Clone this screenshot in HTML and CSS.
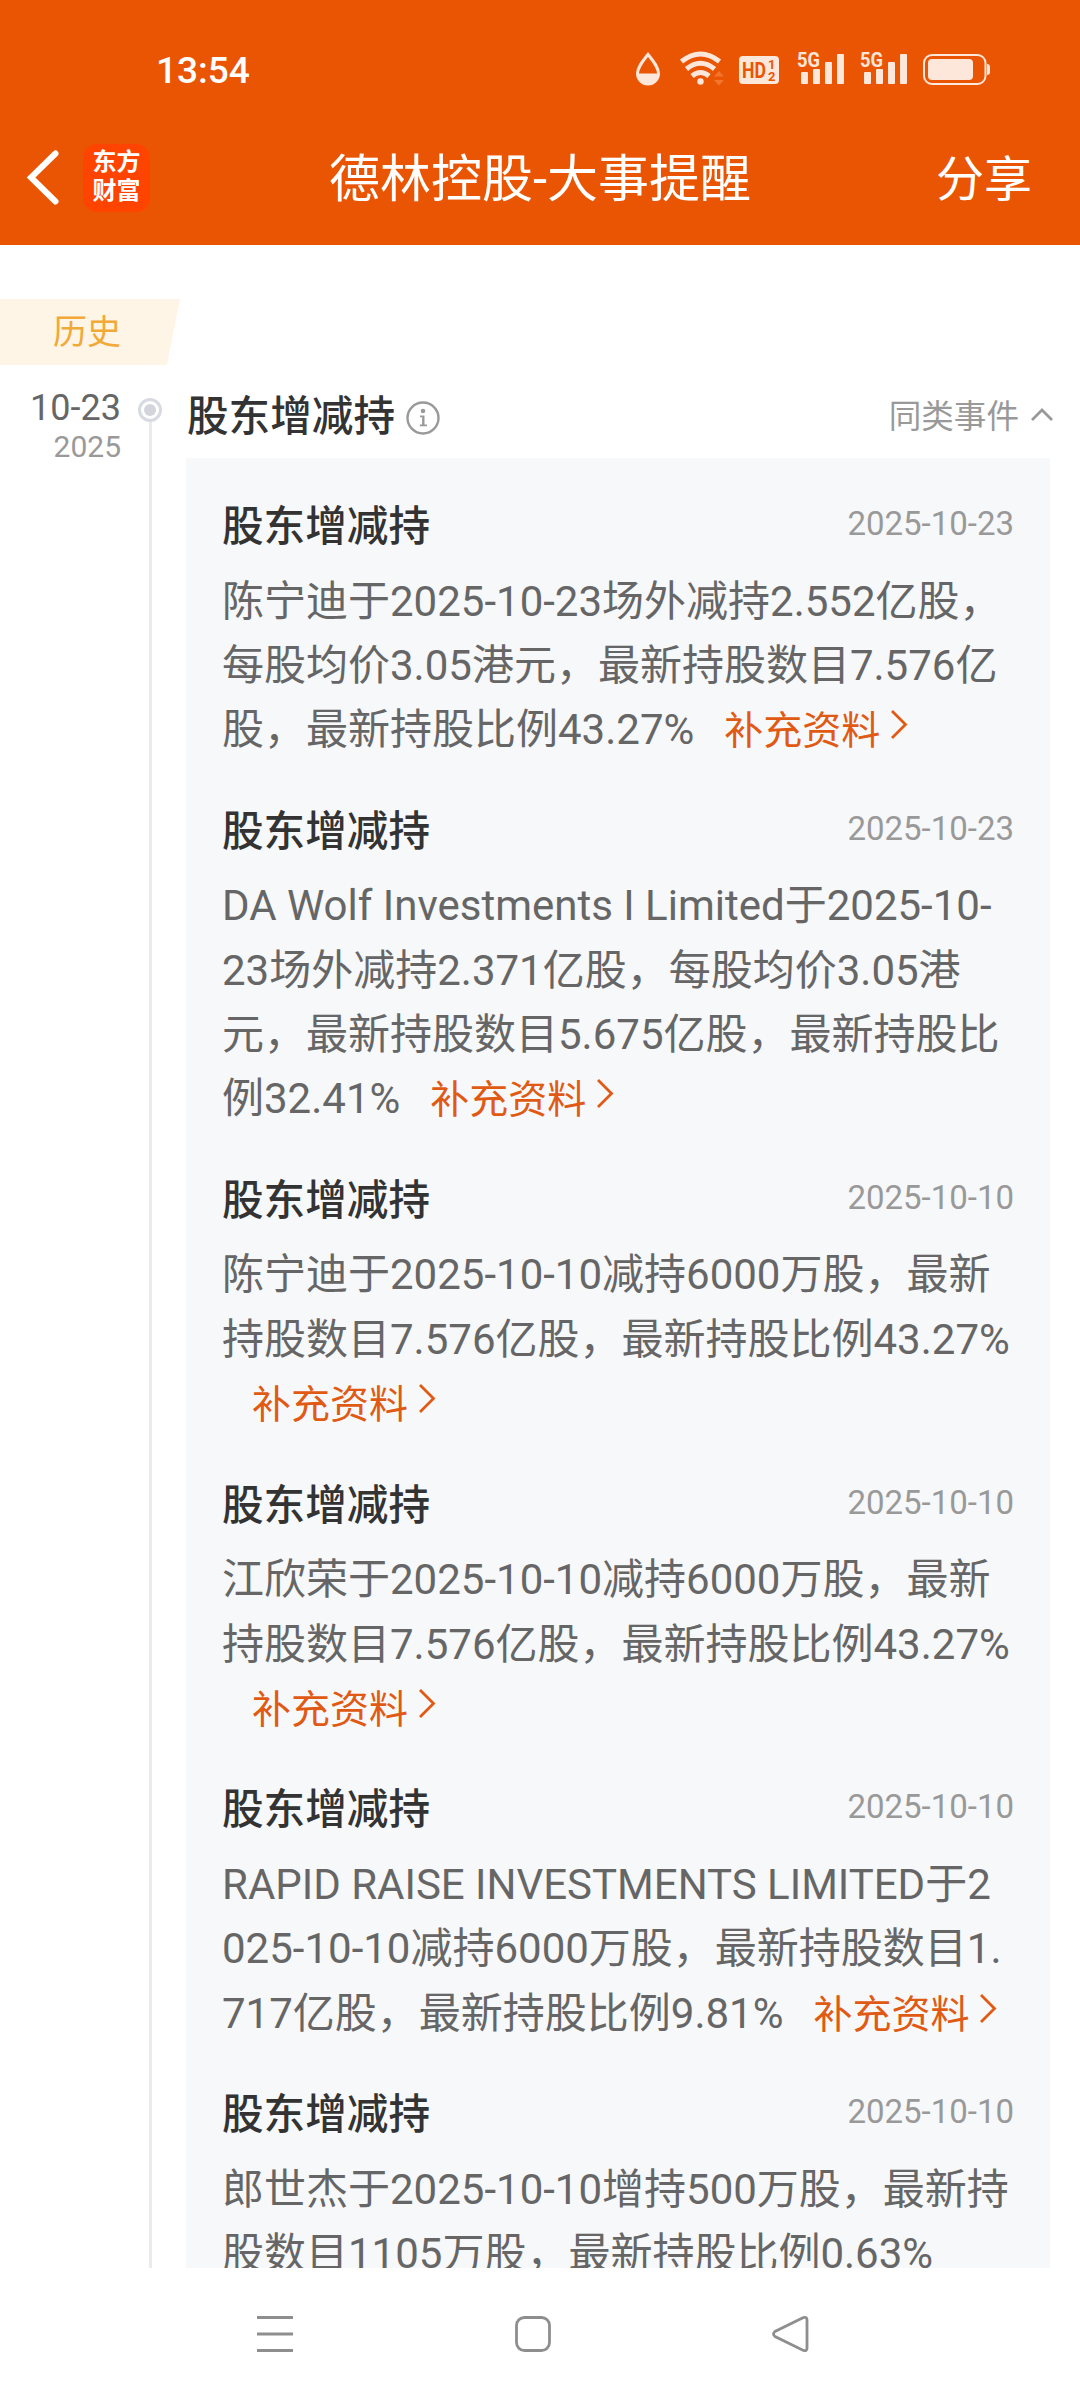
FILE: index.html
```html
<!DOCTYPE html>
<html lang="zh-CN">
<head>
<meta charset="utf-8">
<title>德林控股-大事提醒</title>
<link rel="stylesheet" href="styles.css">
</head>
<body>
<div class="screen">
  <header class="header">
    <div class="status">
      <span class="clock">13:54</span>
      <svg class="status-icons" width="370" height="48" viewBox="630 46 370 48">
        <g fill="#fde6da">
          <path d="M648 54.5C643 61 637.500 67 637.500 73.500a10.500 10.500 0 0 0 21 0C658.500 67 653 61 648 54.500z" fill="none" stroke="#fde6da" stroke-width="3"/>
          <path d="M637.500 73.500h21a10.500 10.500 0 0 1-21 0z"/>
          <g fill="none" stroke="#fde6da" stroke-width="5">
            <path d="M681.500 61.500q19-15 38 0"/>
            <path d="M686.500 69q14-11.500 28 0"/>
            <path d="M692 76q8.500-7 17 0"/>
          </g>
          <circle cx="700.500" cy="81.500" r="3.200"/>
          <path d="M719 71l5 5.500h-10zM719 85.500l5-5.500h-10z" fill="#f3752e"/>
          <rect x="739" y="56" width="40" height="28" rx="4"/>
          <rect x="801" y="72" width="7" height="12" rx="1"/><rect x="813" y="69" width="7" height="15" rx="1"/><rect x="825" y="62" width="7" height="22" rx="1"/><rect x="837" y="54" width="7" height="30" rx="1"/>
          <rect x="864" y="72" width="7" height="12" rx="1"/><rect x="876" y="69" width="7" height="15" rx="1"/><rect x="888" y="62" width="7" height="22" rx="1"/><rect x="900" y="54" width="7" height="30" rx="1"/>
          <rect x="924" y="55" width="61.500" height="29" rx="8" fill="none" stroke="#fde6da" stroke-width="2"/>
          <rect x="928" y="59" width="45" height="21" rx="4"/>
          <path d="M987 64q3 0 3 3v5q0 3-3 3z"/>
        </g>
        <text class="hd" x="742" y="78" textLength="24" lengthAdjust="spacingAndGlyphs">HD</text>
        <text class="hd-small" x="768" y="69">1</text>
        <text class="hd-small" x="768" y="81">2</text>
        <text class="net" x="797" y="67" textLength="23" lengthAdjust="spacingAndGlyphs">5G</text>
        <text class="net" x="860" y="67" textLength="23" lengthAdjust="spacingAndGlyphs">5G</text>
      </svg>
    </div>
    <div class="titlebar">
      <div class="left">
        <svg width="36" height="60" viewBox="25 148 36 60"><path d="M55.500 153.500L31 177.500l24.500 24" fill="none" stroke="#fff" stroke-width="6" stroke-linecap="round"/></svg>
        <div class="logo"><span>东方</span><span>财富</span></div>
      </div>
      <h1>德林控股-大事提醒</h1>
      <span class="share">分享</span>
    </div>
  </header>

  <main class="content">
    <div class="tag">历史</div>
    <div class="timeline">
      <div class="day"><span class="md">10-23</span><span class="year">2025</span></div>
      <div class="rail"><i class="dot"></i><i class="line"></i></div>
      <section class="event">
        <div class="event-head">
          <h2>股东增减持</h2>
          <svg class="info" width="34" height="34" viewBox="0 0 34 34"><circle cx="17" cy="17" r="15.500" fill="none" stroke="#999" stroke-width="2.400"/><circle cx="17" cy="10" r="2.300" fill="#999"/><path d="M14 14.500h4.500v9H21v1.800h-7.200v-1.800h2.300v-7.200H14z" fill="#999"/></svg>
          <span class="same">同类事件</span>
          <svg class="up" width="22" height="14" viewBox="0 0 22 14"><path d="M1 12L11 2l10 10" fill="none" stroke="#999" stroke-width="2.800"/></svg>
        </div>
        <div class="card">
          <article>
            <div class="row"><h3>股东增减持</h3><time>2025-10-23</time></div>
            <p>陈宁迪于2025-10-23场外减持2.552亿股，<br>每股均价3.05港元，最新持股数目7.576亿<br>股，最新持股比例43.27%<a>补充资料<svg width="18" height="31" viewBox="0 0 18 31"><path d="M2 2l13.500 13.500L2 29" /></svg></a></p>
          </article>
          <article>
            <div class="row"><h3>股东增减持</h3><time>2025-10-23</time></div>
            <p>DA Wolf Investments I Limited于2025-10-<br>23场外减持2.371亿股，每股均价3.05港<br>元，最新持股数目5.675亿股，最新持股比<br>例32.41%<a>补充资料<svg width="18" height="31" viewBox="0 0 18 31"><path d="M2 2l13.500 13.500L2 29" /></svg></a></p>
          </article>
          <article>
            <div class="row"><h3>股东增减持</h3><time>2025-10-10</time></div>
            <p>陈宁迪于2025-10-10减持6000万股，最新<br>持股数目7.576亿股，最新持股比例43.27%<br><a>补充资料<svg width="18" height="31" viewBox="0 0 18 31"><path d="M2 2l13.500 13.500L2 29" /></svg></a></p>
          </article>
          <article>
            <div class="row"><h3>股东增减持</h3><time>2025-10-10</time></div>
            <p>江欣荣于2025-10-10减持6000万股，最新<br>持股数目7.576亿股，最新持股比例43.27%<br><a>补充资料<svg width="18" height="31" viewBox="0 0 18 31"><path d="M2 2l13.500 13.500L2 29" /></svg></a></p>
          </article>
          <article>
            <div class="row"><h3>股东增减持</h3><time>2025-10-10</time></div>
            <p>RAPID RAISE INVESTMENTS LIMITED于2<br>025-10-10减持6000万股，最新持股数目1.<br>717亿股，最新持股比例9.81%<a>补充资料<svg width="18" height="31" viewBox="0 0 18 31"><path d="M2 2l13.500 13.500L2 29" /></svg></a></p>
          </article>
          <article>
            <div class="row"><h3>股东增减持</h3><time>2025-10-10</time></div>
            <p>郎世杰于2025-10-10增持500万股，最新持<br>股数目1105万股，最新持股比例0.63%</p>
          </article>
        </div>
      </section>
    </div>
  </main>

  <nav class="navbar">
    <svg width="40" height="40" viewBox="0 0 40 40"><path d="M2 3.500h36M2 20h36M2 36.500h36"/></svg>
    <svg width="40" height="40" viewBox="0 0 40 40"><rect x="3.500" y="3.500" width="33" height="33" rx="8"/></svg>
    <svg width="40" height="40" viewBox="0 0 40 40"><path d="M33.500 3.500L5 17.500q-3 2.500 0 5L33.500 36.500q3.500 1 3.500-2.500V6q0-3.500-3.500-2.500z"/></svg>
  </nav>
</div>
</body>
</html>
```
FILE: styles.css
```css
* { box-sizing: border-box; }
body {
  margin: 0;
  background: #fff;
  font-family: Roboto, "Noto Sans CJK SC", sans-serif;
  color: #666;
}
h1, h2, h3, p { margin: 0; font-weight: 400; }
svg { display: block; flex: none; }
.screen {
  width: 1080px;
  height: 2400px;
  display: flex;
  flex-direction: column;
  overflow: hidden;
}
.header {
  flex: none;
  height: 245px;
  background: #ea5504;
  color: #fff;
  display: flex;
  flex-direction: column;
}
.status {
  height: 112px;
  padding: 28px 80px 0 156px;
  display: flex;
  align-items: center;
  justify-content: space-between;
}
.clock { font-size: 37px; font-weight: 500; }
.hd { font: 700 22px Roboto, sans-serif; fill: #ea5504; }
.hd-small { font: 700 13px Roboto, sans-serif; fill: #ea5504; }
.net { font: 700 21px Roboto, sans-serif; fill: #fde6da; }
.titlebar {
  height: 133px;
  padding: 0 48px;
  display: grid;
  grid-template-columns: 1fr auto 1fr;
  align-items: center;
}
.left { display: flex; align-items: center; gap: 22px; margin: -2px 0 0 -23px; }
.logo {
  width: 67px;
  height: 68px;
  border-radius: 14px;
  background: #ff4400;
  display: flex;
  flex-direction: column;
  align-items: center;
  justify-content: center;
  padding-bottom: 2px;
  font-size: 24px;
  font-weight: 700;
  line-height: 29px;
}
h1 { font-size: 51px; line-height: 60px; padding-top: 3px; }
.share { font-size: 48px; line-height: 60px; justify-self: end; padding-top: 3px; }
.content {
  flex: none;
  height: 2023px;
  padding-top: 54px;
  overflow: hidden;
}
.tag {
  width: 180px;
  height: 66px;
  padding-left: 53px;
  background: #fef5e7;
  clip-path: polygon(0 0, 100% 0, 167px 100%, 0 100%);
  color: #f1a937;
  font-size: 34px;
  line-height: 67px;
}
.timeline { display: flex; height: 1903px; }
.day {
  width: 121px;
  padding-top: 22px;
  display: flex;
  flex-direction: column;
  align-items: flex-end;
}
.md { font-size: 36px; line-height: 42px; }
.year { font-size: 30px; line-height: 36px; color: #999; }
.rail {
  width: 65px;
  padding: 33px 0 0 17px;
  display: flex;
  flex-direction: column;
}
.dot {
  flex: none;
  width: 24px;
  height: 24px;
  border: 3px solid #d7dae0;
  border-radius: 50%;
  background: #d2d5dc;
  background-clip: content-box;
  padding: 3px;
}
.line { flex: 1; width: 3px; margin-left: 11px; background: #ebebed; }
.event { width: 864px; }
.event-head {
  height: 93px;
  margin-right: -3px;
  padding: 3px 0 0 1px;
  display: flex;
  align-items: center;
}
h2, h3 { font-size: 41.600px; font-weight: 500; color: #333; }
.info { margin: 9px auto 0 11px; }
.same { font-size: 32.600px; color: #999; }
.up { margin: 4px 0 0 12px; }
.card { background: #f7f8fa; padding: 34px 36px 0; }
article { height: 304.760px; }
article:nth-child(2) { height: 369.160px; }
.row {
  height: 62px;
  display: flex;
  align-items: center;
  justify-content: space-between;
}
time { font-size: 33px; color: #999; padding-top: 1px; }
p { padding-top: 15.500px; font-size: 42px; line-height: 64.400px; white-space: nowrap; }
a { margin-left: 30px; font-size: 39px; color: #e05a14; line-height: 1; }
a svg { display: inline-block; margin-left: 10px; vertical-align: 4px; }
a path { fill: none; stroke: #e05a14; stroke-width: 2.800; }
.navbar {
  height: 132px;
  padding: 0 270px 0 255px;
  display: flex;
  align-items: center;
  justify-content: space-between;
}
.navbar path, .navbar rect { fill: none; stroke: #8e8e8e; stroke-width: 2.800; }
```
